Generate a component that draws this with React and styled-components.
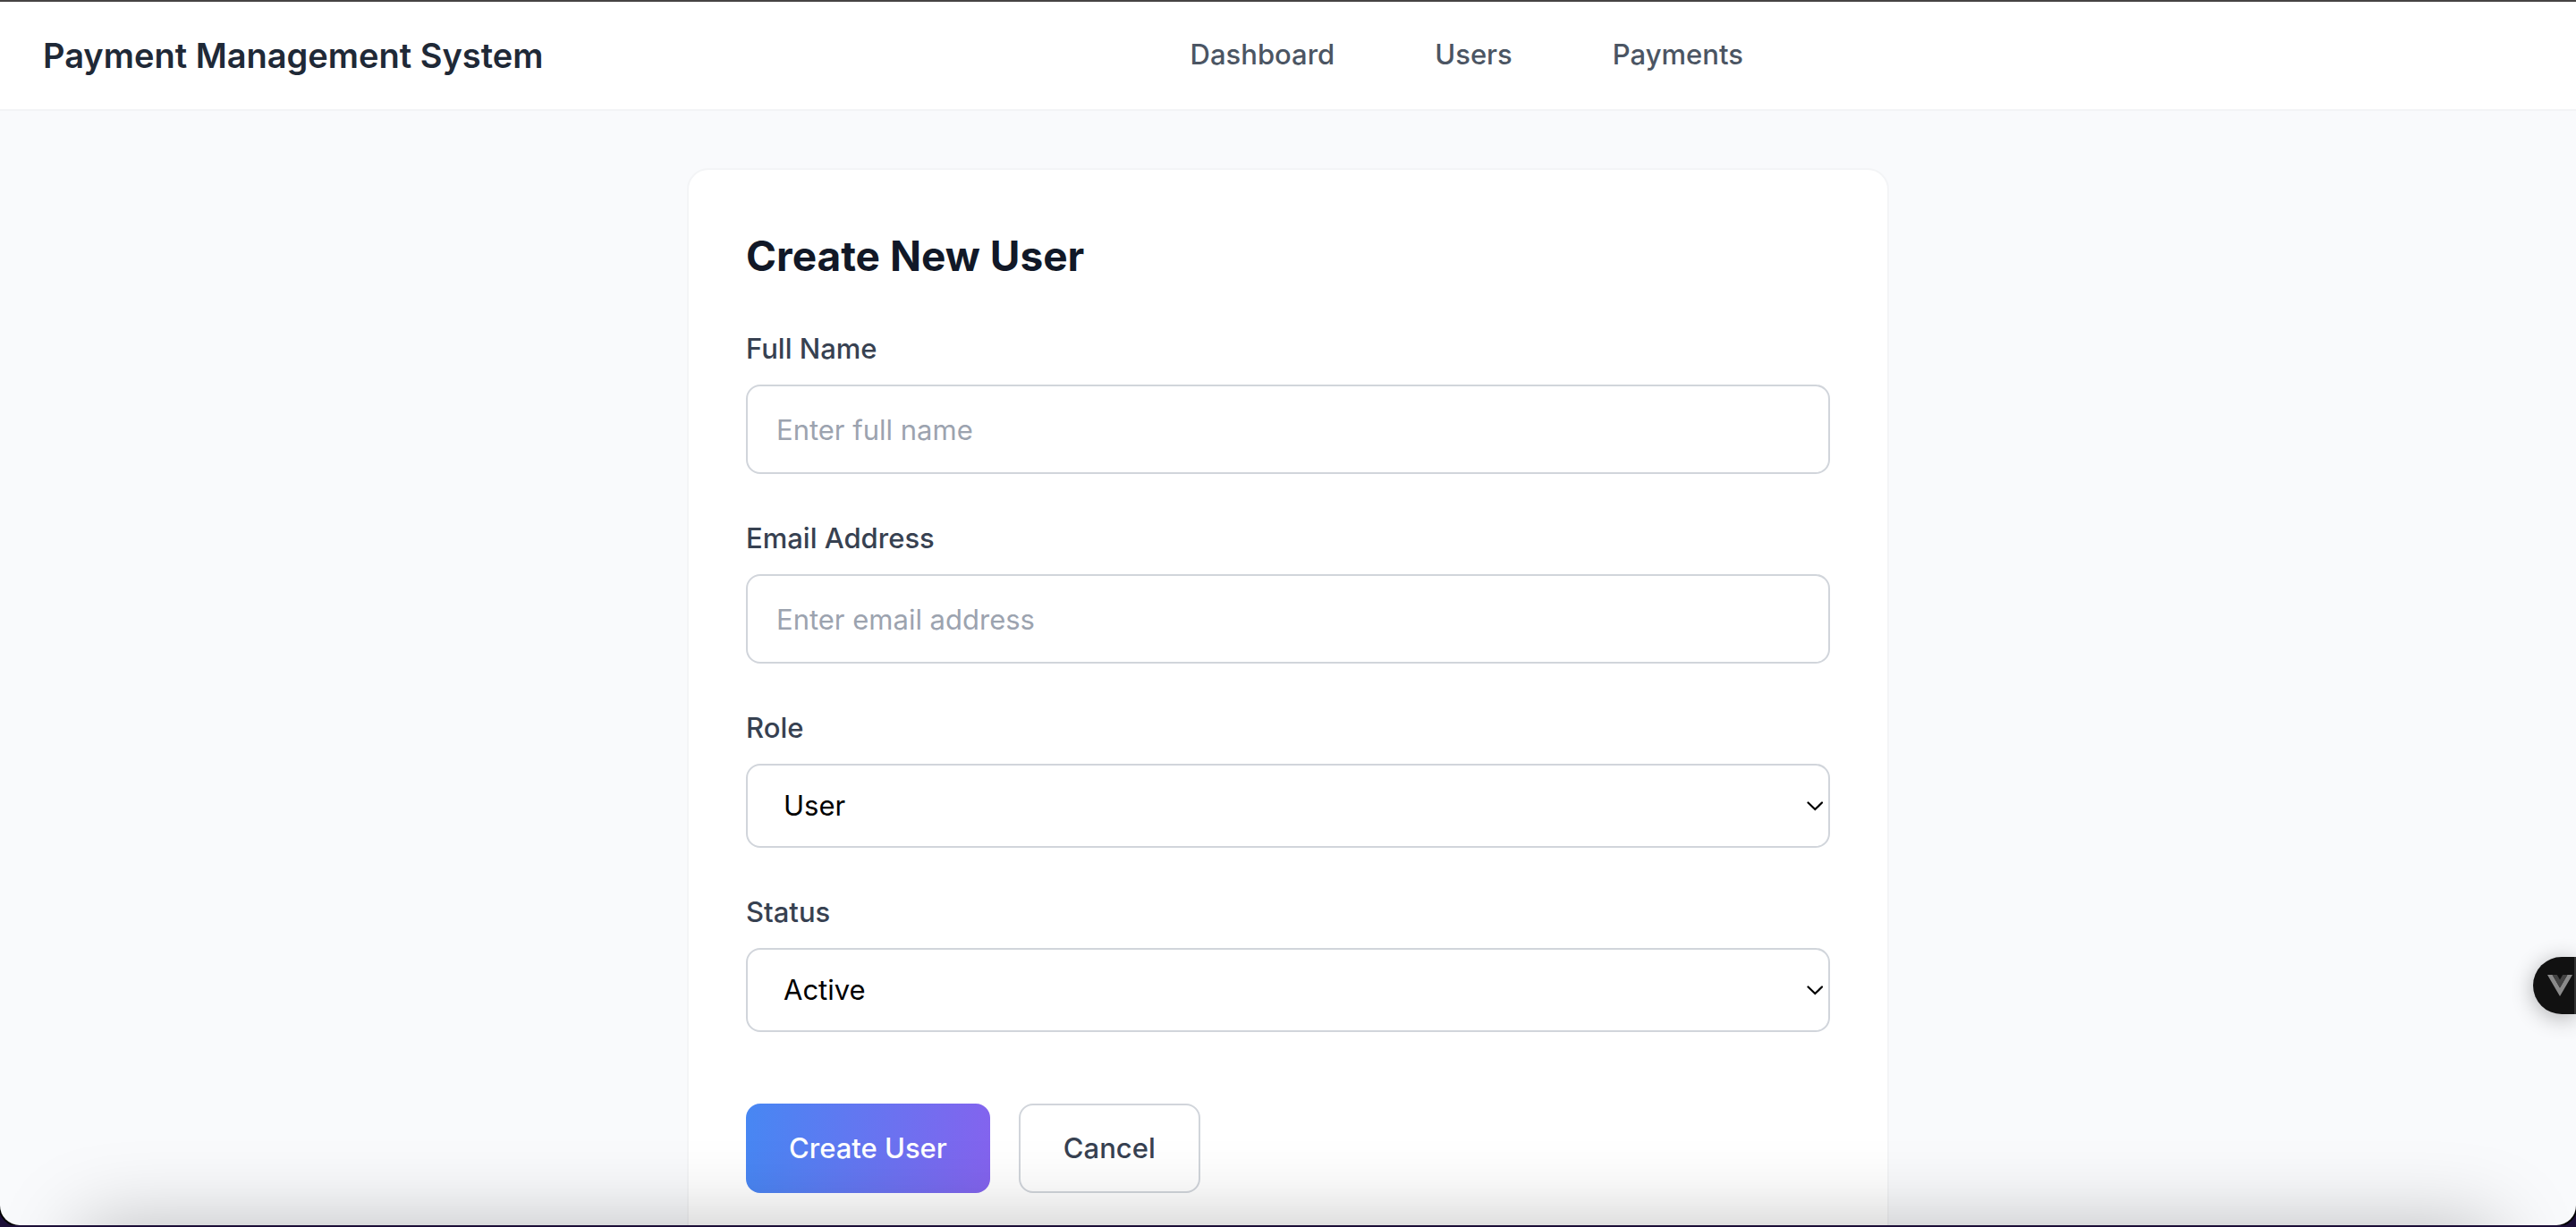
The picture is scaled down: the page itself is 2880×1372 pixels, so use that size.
import React, { useId } from "react";
import styled, { createGlobalStyle } from "styled-components";

const GlobalStyle = createGlobalStyle`
  *, *::before, *::after { box-sizing: border-box; }
  body {
    margin: 0;
    background: #1c0f38;
    font-family: Inter, "Liberation Sans", sans-serif;
    font-size: 31px;
    line-height: 48px;
  }
  button, input, select { font: inherit; margin: 0; }
`;

const Window = styled.div`
  position: relative;
  height: calc(100vh - 2px);
  overflow: hidden;
  border-top: 2px solid #464343;
  border-radius: 0 0 22px 22px;
  background: #f9fafc;
  box-shadow: 0 0 0 2px #000;
`;

const Header = styled.header`
  display: flex;
  align-items: center;
  height: 122px;
  padding: 0 208px 0 48px;
  background: #fff;
  border-bottom: 2px solid #f3f4f6;
`;

const Brand = styled.div`
  font-size: 38px;
  font-weight: 600;
  color: #1f2937;
`;

const Nav = styled.nav`
  display: flex;
  flex: 1;
  justify-content: center;
  gap: 64px;
`;

const NavLink = styled.a`
  padding: 0 24px 2px;
  font-weight: 500;
  color: #4b5563;
  text-decoration: none;
`;

const Main = styled.main`
  padding: 64px 48px;
`;

const Card = styled.section`
  max-width: 1344px;
  margin: 0 auto;
  padding: 64px;
  background: #fff;
  border: 2px solid #f3f4f6;
  border-radius: 24px;
`;

const Title = styled.h1`
  margin: 0 0 48px;
  font-size: 46px;
  line-height: 64px;
  font-weight: 700;
  color: #111827;
`;

const Form = styled.form`
  display: grid;
  gap: 48px;
`;

const FieldGroup = styled.div`
  display: grid;
  gap: 16px;
`;

const Label = styled.label`
  font-weight: 500;
  color: #374151;
`;

const Input = styled.input`
  width: 100%;
  height: 100px;
  padding: 0 32px;
  background: #fff;
  border: 2px solid #d1d5db;
  border-radius: 16px;
  color: #000;
  &::placeholder { color: #9ca3af; opacity: 1; }
`;

const SelectWrap = styled.div`
  display: grid;
  align-items: center;
  & > * { grid-area: 1 / 1; }
`;

const Select = styled.select`
  appearance: none;
  width: 100%;
  height: 94px;
  padding: 0 40px;
  background: #fff;
  border: 2px solid #d1d5db;
  border-radius: 16px;
  color: #000;
`;

const Chevron = styled.svg`
  justify-self: end;
  margin-right: 8px;
  pointer-events: none;
`;

const Actions = styled.div`
  display: flex;
  gap: 32px;
  padding-top: 32px;
`;

const Button = styled.button`
  height: 100px;
  padding: 0 48px;
  border: ${(p) => (p.$primary ? "0" : "2px solid #d1d5db")};
  border-radius: 16px;
  background: ${(p) => (p.$primary ? "linear-gradient(95deg, #4787f3, #8463ee)" : "#fff")};
  color: ${(p) => (p.$primary ? "#fff" : "#374151")};
  font-weight: 500;
`;

const DevToolsButton = styled.button`
  position: absolute;
  right: 0;
  top: 1068px;
  display: flex;
  align-items: center;
  width: 48px;
  height: 64px;
  padding: 0 0 0 16px;
  border: 0;
  border-right: 2px solid #333;
  border-radius: 32px 0 0 32px;
  background: #111;
  box-shadow: 0 4px 24px rgba(0, 0, 0, 0.3);
`;

const BottomShade = styled.div`
  position: absolute;
  left: 90px;
  right: 90px;
  bottom: -100px;
  height: 100px;
  box-shadow: 0 0 90px rgba(0, 0, 0, 0.25);
  pointer-events: none;
`;

function TextField({ label, ...rest }) {
  const id = useId();
  return (
    <FieldGroup>
      <Label htmlFor={id}>{label}</Label>
      <Input id={id} {...rest} />
    </FieldGroup>
  );
}

function SelectField({ label, options }) {
  const id = useId();
  return (
    <FieldGroup>
      <Label htmlFor={id}>{label}</Label>
      <SelectWrap>
        <Select id={id}>
          {options.map((o) => <option key={o}>{o}</option>)}
        </Select>
        <Chevron width="18" height="12" viewBox="0 0 18 12" fill="none" stroke="#000" strokeWidth="2.2" strokeLinecap="round" aria-hidden="true">
          <path d="M1.5 2.5 9.3 10 17 2.5" />
        </Chevron>
      </SelectWrap>
    </FieldGroup>
  );
}

export default function App() {
  return (
    <>
      <GlobalStyle />
      <Window>
        <Header>
          <Brand>Payment Management System</Brand>
          <Nav>
            <NavLink href="#dashboard">Dashboard</NavLink>
            <NavLink href="#users">Users</NavLink>
            <NavLink href="#payments">Payments</NavLink>
          </Nav>
        </Header>
        <Main>
          <Card>
            <Title>Create New User</Title>
            <Form onSubmit={(e) => e.preventDefault()}>
              <TextField label="Full Name" type="text" placeholder="Enter full name" />
              <TextField label="Email Address" type="email" placeholder="Enter email address" />
              <SelectField label="Role" options={["User", "Admin"]} />
              <SelectField label="Status" options={["Active", "Inactive"]} />
              <Actions>
                <Button $primary type="submit">Create User</Button>
                <Button type="button">Cancel</Button>
              </Actions>
            </Form>
          </Card>
        </Main>
        <DevToolsButton type="button" aria-label="Toggle devtools">
          <svg width="28" height="24" viewBox="0 0 28 24" aria-hidden="true">
            <path d="M0 0h5.6L14 14.5 22.4 0H28L14 24z" fill="#8a8a8a" />
            <path d="M5.6 0h5.2L14 5.4 17.2 0h5.2L14 14.5z" fill="#444" />
          </svg>
        </DevToolsButton>
        <BottomShade />
      </Window>
    </>
  );
}
